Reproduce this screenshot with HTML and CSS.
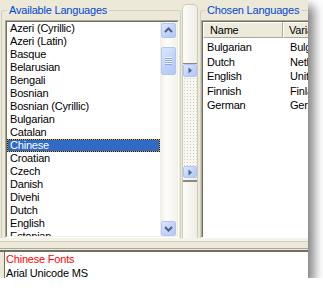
FILE: index.html
```html
<!DOCTYPE html>
<html lang="en">
<head>
  <meta charset="UTF-8" />
  <title>Languages</title>
  <link rel="stylesheet" href="styles.css">
</head>
<body>

  <div class="window">
    <div class="top">

      <fieldset class="group group-left">
        <legend>Available Languages</legend>
        <div class="listbox">
          <div class="listbox-in">
            <ul class="items">
              <li>Azeri (Cyrillic)</li>
              <li>Azeri (Latin)</li>
              <li>Basque</li>
              <li>Belarusian</li>
              <li>Bengali</li>
              <li>Bosnian</li>
              <li>Bosnian (Cyrillic)</li>
              <li>Bulgarian</li>
              <li>Catalan</li>
              <li class="selected">Chinese</li>
              <li>Croatian</li>
              <li>Czech</li>
              <li>Danish</li>
              <li>Divehi</li>
              <li>Dutch</li>
              <li>English</li>
              <li>Estonian</li>
            </ul>
            <div class="vscroll">
              <div class="sbtn sbtn-up">
                <svg width="13" height="13" viewBox="0 0 13 13"><path d="M3 8 L6.5 4.5 L10 8" fill="none" stroke="#4d6185" stroke-width="2"/></svg>
              </div>
              <div class="thumb">
                <svg width="7" height="8" viewBox="0 0 7 8"><path d="M0 .5h7M0 2.5h7M0 4.5h7M0 6.5h7" stroke="#eef3fe"/><path d="M0 1.5h7M0 3.5h7M0 5.5h7M0 7.5h7" stroke="#8ca7e0"/></svg>
              </div>
              <div class="track"></div>
              <div class="sbtn sbtn-down">
                <svg width="13" height="13" viewBox="0 0 13 13"><path d="M3 5 L6.5 8.5 L10 5" fill="none" stroke="#4d6185" stroke-width="2"/></svg>
              </div>
            </div>
          </div>
        </div>
      </fieldset>

      <div class="mover">
        <div class="mover-box">
          <div class="mbtn">
            <svg width="10" height="11" viewBox="0 0 10 11"><path d="M3.5 2.5 L7 5.5 L3.5 8.5 Z" fill="#4d6185"/></svg>
          </div>
          <div class="mover-fill"></div>
          <div class="mbtn">
            <svg width="10" height="11" viewBox="0 0 10 11"><path d="M3.5 2.5 L7 5.5 L3.5 8.5 Z" fill="#4d6185"/></svg>
          </div>
        </div>
      </div>

      <fieldset class="group group-right">
        <legend>Chosen Languages</legend>
        <div class="listview">
          <div class="listview-in">
            <div class="lv-header">
              <span class="col1">Name</span>
              <span class="col2">Variant</span>
            </div>
            <div class="lv-rows">
              <div class="lv-row"><span class="col1">Bulgarian</span><span class="col2">Bulgaria</span></div>
              <div class="lv-row"><span class="col1">Dutch</span><span class="col2">Netherlands</span></div>
              <div class="lv-row"><span class="col1">English</span><span class="col2">United Kingdom</span></div>
              <div class="lv-row"><span class="col1">Finnish</span><span class="col2">Finland</span></div>
              <div class="lv-row"><span class="col1">German</span><span class="col2">Germany</span></div>
            </div>
          </div>
        </div>
      </fieldset>

    </div>

    <div class="hsplit"></div>

    <div class="fonts">
      <div class="fonts-title">Chinese Fonts</div>
      <div>Arial Unicode MS</div>
    </div>
  </div>

</body>
</html>
```

FILE: styles.css
```css
body {
  margin: 0;
  background-color: #ffffff;
  font-family: "Liberation Sans", Arial, sans-serif;
  font-size: 11px;
  letter-spacing: -0.2px;
  color: #000;
}

.window {
  width: 308px;
  height: 278px;
  background-color: #ece9d8;
  display: flex;
  flex-direction: column;
  overflow: hidden;
  box-shadow: 6px 6px 10px rgba(0, 0, 0, 0.5);
}

.top {
  height: 238px;
  display: flex;
  flex-shrink: 0;
}

/* group boxes */
.group {
  box-sizing: border-box;
  margin: 4px 0 0;
  padding: 3px 0 0;
  border: 1px solid #d0d0bf;
  border-bottom: none;
  border-radius: 3px 3px 0 0;
  min-width: 0;
  flex-shrink: 0;
}

.group legend {
  padding: 0 2px;
  line-height: 13px;
  color: #0046d5;
}

.group-left {
  margin-left: 1px;
  width: 180px;
  padding-left: 3px;
  padding-right: 1px;
}

.group-left legend {
  margin-left: 2px;
}

.group-right {
  margin-left: 2px;
  width: 150px;
}

.group-right legend {
  margin-left: 4px;
}

/* list box */
.listbox {
  height: 218px;
  box-sizing: border-box;
  border: 1px solid;
  border-color: #aca899 #ffffff #ffffff #aca899;
}

.listbox-in {
  height: 100%;
  box-sizing: border-box;
  display: flex;
  background-color: #fff;
  border: 1px solid;
  border-color: #716f64 #f1efe2 #f1efe2 #716f64;
}

.items {
  list-style: none;
  margin: 0;
  padding: 0;
  flex: 1;
  overflow: hidden;
}

.items li {
  height: 13px;
  line-height: 13px;
  padding-left: 3px;
  white-space: nowrap;
}

.items li.selected {
  box-sizing: border-box;
  padding-left: 2px;
  line-height: 11px;
  color: #fff;
  border: 1px dotted #1c1c1c;
  background: linear-gradient(#316ac5, #316ac5) padding-box, #d2a94c;
}

.vscroll {
  width: 17px;
  display: flex;
  flex-direction: column;
  background: linear-gradient(to right, #f0eee6, #fdfdfa 40%, #f4f2ec);
}

.sbtn,
.thumb,
.mbtn {
  box-sizing: border-box;
  display: flex;
  align-items: center;
  justify-content: center;
  border: 1px solid #b3c6f2;
  border-radius: 2px;
  background: linear-gradient(135deg, #dce7fe, #bfd1fa 60%, #b4c8f6);
}

.sbtn {
  height: 15px;
  margin: 0 1px;
}

.sbtn-up {
  margin-top: 1px;
}

.thumb {
  height: 28px;
  margin: 9px 1px 0;
}

.track {
  flex: 1;
}

/* middle mover strip */
.mover {
  width: 16px;
  box-sizing: border-box;
  margin: 4px 0 0 1px;
  border: 1px solid #cdcab9;
  border-bottom: none;
  border-radius: 5px 5px 0 0;
  background: linear-gradient(to right, #fcfcfa, #efede4);
  flex-shrink: 0;
}

.mover-box {
  box-sizing: border-box;
  height: 119px;
  margin-top: 58px;
  display: flex;
  flex-direction: column;
  border-top: 1px solid #8b897d;
  border-bottom: 2px solid #8b897d;
  padding-bottom: 2px;
}

.mbtn {
  height: 13px;
}

.mbtn + .mover-fill + .mbtn {
  height: 12px;
}

.mover-fill {
  flex: 1;
  background-color: #f7f6f1;
  background-image: radial-gradient(#cfcdc3 0.7px, transparent 0.9px);
  background-size: 3px 3px;
}

/* list view */
.listview {
  height: 218px;
  box-sizing: border-box;
  border: 1px solid;
  border-color: #aca899 #ffffff #ffffff #aca899;
}

.listview-in {
  height: 100%;
  box-sizing: border-box;
  background-color: #fff;
  border-top: 1px solid #716f64;
  border-left: 1px solid #716f64;
}

.lv-header {
  display: flex;
  height: 16px;
  background-color: #ebeadb;
}

.lv-header span {
  box-sizing: border-box;
  line-height: 14px;
  border-top: 1px solid #fff;
  border-left: 1px solid #fff;
  border-right: 1px solid #aca899;
  border-bottom: 1px solid #aca899;
  white-space: nowrap;
}

.lv-header .col1 {
  width: 80px;
  flex-shrink: 0;
  padding-left: 6px;
}

.lv-header .col2 {
  flex: 1;
  padding-left: 5px;
}

.lv-rows {
  padding-top: 2.4px;
}

.lv-row {
  display: flex;
  height: 14.4px;
  line-height: 14px;
  white-space: nowrap;
}

.lv-row .col1 {
  width: 80px;
  flex-shrink: 0;
  padding-left: 4px;
  box-sizing: border-box;
}

.lv-row .col2 {
  padding-left: 7px;
}

/* horizontal splitter */
.hsplit {
  height: 14px;
  flex-shrink: 0;
  background: linear-gradient(#f4f3eb 0 3px, #d3cfbf 3px 4px, #ece9d8 4px 10px, #aca899 10px 11px, #ece9d8 11px 12px, #716f64 12px 14px);
}

/* fonts panel */
.fonts {
  flex: 1;
  margin-left: 4px;
  padding-left: 1px;
  background-color: #fff;
  border-left: 1px solid #716f64;
  line-height: 14px;
  white-space: nowrap;
}

.fonts-title {
  color: #ff0000;
}
```
